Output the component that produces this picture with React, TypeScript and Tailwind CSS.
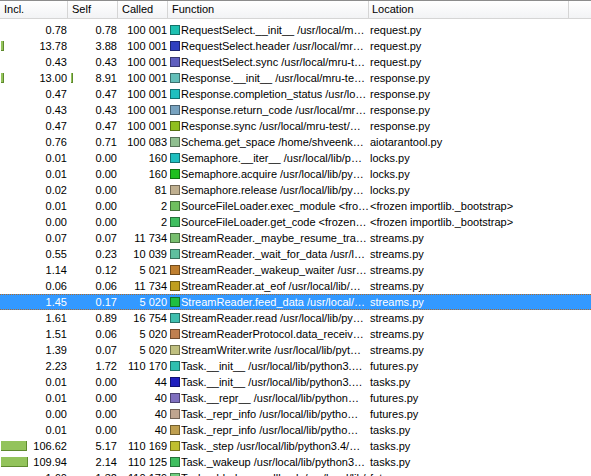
import React from "react";

type Row = {
  incl: string;
  self: string;
  called: string;
  color: string;
  fn: string;
  loc: string;
  inclBar?: number;
  selfBar?: number;
  selected?: boolean;
};

const rows: Row[] = [
  { incl: "0.78", self: "0.78", called: "100 001", color: "#1ec0b0", fn: "RequestSelect.__init__ /usr/local/m…", loc: "request.py" },
  { incl: "13.78", self: "3.88", called: "100 001", color: "#2f3fbf", fn: "RequestSelect.header /usr/local/mr…", loc: "request.py", inclBar: 3 },
  { incl: "0.43", self: "0.43", called: "100 001", color: "#5f5fbf", fn: "RequestSelect.sync /usr/local/mru-t…", loc: "request.py" },
  { incl: "13.00", self: "8.91", called: "100 001", color: "#63bfb9", fn: "Response.__init__ /usr/local/mru-te…", loc: "response.py", inclBar: 3, selfBar: 2 },
  { incl: "0.47", self: "0.47", called: "100 001", color: "#1fbfbf", fn: "Response.completion_status /usr/lo…", loc: "response.py" },
  { incl: "0.43", self: "0.43", called: "100 001", color: "#77a2bf", fn: "Response.return_code /usr/local/mr…", loc: "response.py" },
  { incl: "0.47", self: "0.47", called: "100 001", color: "#8fbf1f", fn: "Response.sync /usr/local/mru-test/…", loc: "response.py" },
  { incl: "0.76", self: "0.71", called: "100 083", color: "#8fbf8f", fn: "Schema.get_space /home/shveenk…", loc: "aiotarantool.py" },
  { incl: "0.01", self: "0.00", called: "160", color: "#1fbfbf", fn: "Semaphore.__iter__ /usr/local/lib/p…", loc: "locks.py" },
  { incl: "0.01", self: "0.00", called: "160", color: "#1fbf1f", fn: "Semaphore.acquire /usr/local/lib/py…", loc: "locks.py" },
  { incl: "0.02", self: "0.00", called: "81", color: "#bfaf8f", fn: "Semaphore.release /usr/local/lib/py…", loc: "locks.py" },
  { incl: "0.01", self: "0.00", called: "2", color: "#6fbf5f", fn: "SourceFileLoader.exec_module <fro…", loc: "<frozen importlib._bootstrap>" },
  { incl: "0.00", self: "0.00", called: "2", color: "#3fbf5f", fn: "SourceFileLoader.get_code <frozen…", loc: "<frozen importlib._bootstrap>" },
  { incl: "0.07", self: "0.07", called: "11 734", color: "#77bf6f", fn: "StreamReader._maybe_resume_tra…", loc: "streams.py" },
  { incl: "0.55", self: "0.23", called: "10 039", color: "#5fbf9f", fn: "StreamReader._wait_for_data /usr/l…", loc: "streams.py" },
  { incl: "1.14", self: "0.12", called: "5 021", color: "#bf7f2f", fn: "StreamReader._wakeup_waiter /usr…", loc: "streams.py" },
  { incl: "0.06", self: "0.06", called: "11 734", color: "#bf9f1f", fn: "StreamReader.at_eof /usr/local/lib/…", loc: "streams.py" },
  { incl: "1.45", self: "0.17", called: "5 020", color: "#1fbf3f", fn: "StreamReader.feed_data /usr/local/…", loc: "streams.py", selected: true },
  { incl: "1.61", self: "0.89", called: "16 754", color: "#3fbfaf", fn: "StreamReader.read /usr/local/lib/py…", loc: "streams.py" },
  { incl: "1.51", self: "0.06", called: "5 020", color: "#bf7f4f", fn: "StreamReaderProtocol.data_receiv…", loc: "streams.py" },
  { incl: "1.39", self: "0.07", called: "5 020", color: "#bfbf7f", fn: "StreamWriter.write /usr/local/lib/pyt…", loc: "streams.py" },
  { incl: "2.23", self: "1.72", called: "110 170", color: "#2fbfaf", fn: "Task.__init__ /usr/local/lib/python3.…", loc: "futures.py" },
  { incl: "0.01", self: "0.00", called: "44", color: "#1f1fbf", fn: "Task.__init__ /usr/local/lib/python3.…", loc: "tasks.py" },
  { incl: "0.01", self: "0.00", called: "40", color: "#7f6fbf", fn: "Task.__repr__ /usr/local/lib/python…", loc: "futures.py" },
  { incl: "0.00", self: "0.00", called: "40", color: "#bfa58f", fn: "Task._repr_info /usr/local/lib/pytho…", loc: "futures.py" },
  { incl: "0.01", self: "0.00", called: "40", color: "#bf9f4f", fn: "Task._repr_info /usr/local/lib/pytho…", loc: "tasks.py" },
  { incl: "106.62", self: "5.17", called: "110 169", color: "#bfbf2f", fn: "Task._step /usr/local/lib/python3.4/…", loc: "tasks.py", inclBar: 26 },
  { incl: "109.94", self: "2.14", called: "110 125", color: "#3fbf5f", fn: "Task._wakeup /usr/local/lib/python3…", loc: "tasks.py", inclBar: 27 },
  { incl: "1.60", self: "1.32", called: "110 179", color: "#6fcf7f", fn: "Task.add_done_callback /usr/local/lib/…", loc: "futures.py" },
];

function Bar({ w }: { w: number }) {
  return (
    <span
      className="h-[10px] shrink-0 bg-[#93c35b] border-r border-b border-[#5e8a2e]"
      style={{ width: w }}
    />
  );
}

export default function App() {
  const font = { fontFamily: '"Liberation Sans", Arial, sans-serif' };
  return (
    <div className="w-[591px] h-[476px] overflow-hidden bg-white text-[11px] text-black" style={font}>
      <div className="grid grid-cols-[68px_50px_50px_201px_200px_1fr] h-[19px] border-t border-[#8c8c8c] border-b border-b-[#d5d5d5] bg-gradient-to-b from-white to-[#f2f3f5] leading-[17px]">
        <div className="pl-[4px] border-r border-[#d5d5d5]">Incl.</div>
        <div className="pl-[4px] border-r border-[#d5d5d5]">Self</div>
        <div className="pl-[4px] border-r border-[#d5d5d5]">Called</div>
        <div className="pl-[4px] border-r border-[#d5d5d5]">Function</div>
        <div className="pl-[3px] border-r border-[#d5d5d5]">Location</div>
        <div />
      </div>
      <div className="pt-[3px]">
        {rows.map((r, i) => (
          <div
            key={i}
            className={
              "grid grid-cols-[68px_50px_50px_201px_200px_1fr] h-4 leading-4 whitespace-nowrap " +
              (r.selected
                ? "bg-[#3399ff] text-white border-y border-dotted border-[#b06a2a] leading-[14px]"
                : "")
            }
          >
            <div className="flex items-center justify-between pl-[1px] pr-[1px] overflow-hidden">
              {r.inclBar ? <Bar w={r.inclBar} /> : <span />}
              <span>{r.incl}</span>
            </div>
            <div className="flex items-center justify-between pl-[3px] pr-[1px] overflow-hidden">
              {r.selfBar ? <Bar w={r.selfBar} /> : <span />}
              <span>{r.self}</span>
            </div>
            <div className="text-right pr-[1px] overflow-hidden">{r.called}</div>
            <div className="flex items-center pl-[2px] overflow-hidden">
              <span
                className="w-[10px] h-[10px] shrink-0 border border-black/40 mr-[1px]"
                style={{ backgroundColor: r.color }}
              />
              <span className="overflow-hidden">{r.fn}</span>
            </div>
            <div className="pl-[1px] overflow-hidden">{r.loc}</div>
            <div />
          </div>
        ))}
      </div>
    </div>
  );
}
